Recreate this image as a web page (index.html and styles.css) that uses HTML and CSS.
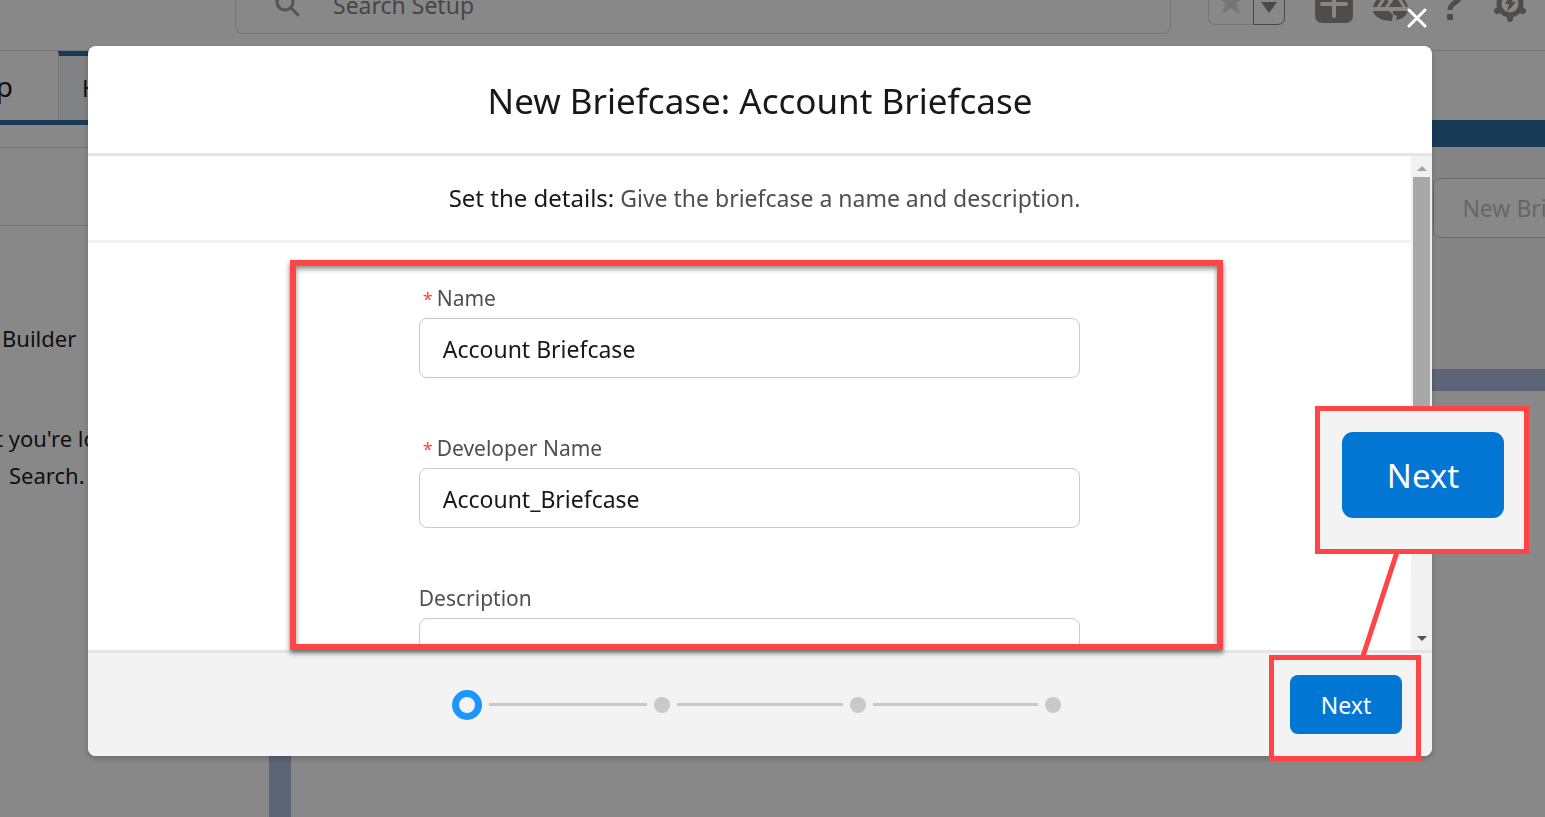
FILE: index.html
```
<!DOCTYPE html>
<html lang="en">
<head>
    <meta charset="UTF-8">
    <title>New Briefcase: Account Briefcase</title>
    <link rel="stylesheet" href="styles.css">
</head>
<body>

<div class="app">
    <header class="global-header">
        <div class="search">
            <svg class="search-icon" width="26" height="26" viewBox="0 0 26 26" fill="none" stroke="#a09c99" stroke-width="3" stroke-linecap="round">
                <circle cx="10" cy="10" r="8"/>
                <path d="M16 16l7 7"/>
            </svg>
            <input class="search-input" type="text" placeholder="Search Setup" aria-label="Search Setup">
        </div>
        <div class="global-actions">
            <div class="favorites">
                <button class="fav-star" aria-label="Favorites">
                    <svg width="28" height="28" viewBox="0 0 28 28"><path fill="#dddbda" d="M14 0l3.500 9.500H27l-7.500 6L23 26l-9-6-9 6 3.500-10.500L1 9.500h9.500z"/></svg>
                </button>
                <button class="fav-list" aria-label="Favorites list">
                    <svg width="16" height="12" viewBox="0 0 16 12"><path fill="#8a8886" d="M0 0h16L8 11z"/></svg>
                </button>
            </div>
            <button class="icon-btn" aria-label="Create">
                <svg width="38" height="38" viewBox="0 0 38 38"><rect y="-1" width="38" height="38" rx="7" fill="#918f8d"/><path d="M19 6v24M7 18h24" stroke="#fff" stroke-width="4" stroke-linecap="round"/></svg>
            </button>
            <button class="icon-btn" aria-label="Guidance">
                <svg width="38" height="38" viewBox="0 0 38 38">
                    <path fill="#918f8d" d="M-1 21a18 18 0 0 1 35 0z"/>
                    <path fill="#918f8d" d="M-1 25h16l4 4-1 6C8 35 0 31-1 25zM19 25h15c-2 5-6 8-12 9l1-4-4-2z"/>
                    <path d="M4 22l8-13 4 6M12 22l10-14 9 14" fill="none" stroke="#fff" stroke-width="3"/>
                </svg>
            </button>
            <button class="icon-btn" aria-label="Help">
                <svg width="38" height="38" viewBox="0 0 38 38"><path d="M10 11c0-12 17-11 17-1 0 7-10 6-10 14" fill="none" stroke="#918f8d" stroke-width="5"/><rect x="14" y="28" width="6" height="6" rx="1" fill="#918f8d"/></svg>
            </button>
            <button class="icon-btn" aria-label="Setup">
                <svg width="38" height="38" viewBox="0 0 38 38">
                    <circle cx="18" cy="18" r="11" fill="none" stroke="#918f8d" stroke-width="5"/>
                    <path d="M18 4v2M18 31v2M5 11l2 1M29 24l2 1M31 11l-2 1M7 24l-2 1" stroke="#918f8d" stroke-width="6" stroke-linecap="round"/>
                    <path fill="#918f8d" d="M17 11h5l-2 5h4l-9 10 2-8h-4z"/>
                </svg>
            </button>
        </div>
    </header>

    <nav class="context-bar">
        <div class="app-name"><span>Setup</span></div>
        <a class="tab" href="#">Home</a>
    </nav>

    <div class="workspace">
        <aside class="sidebar">
            <div class="sidebar-top"></div>
            <div class="sidebar-search"></div>
            <a class="tree-item" href="#">Builder</a>
            <p class="tree-hint hint-first">t you're looking for?</p>
            <p class="tree-hint hint-second">Search.</p>
        </aside>
        <main class="content">
            <section class="page-card">
                <button class="new-btn" disabled>New Briefcase</button>
            </section>
            <section class="list-card"></section>
        </main>
    </div>
</div>

<div class="backdrop">
    <div class="modal" role="dialog" aria-modal="true" aria-labelledby="modalTitle">
        <button class="close-btn" aria-label="Close">
            <svg width="20" height="20" viewBox="0 0 20 20" stroke="#fff" stroke-width="3" stroke-linecap="round"><path d="M2 2l16 16M18 2L2 18"/></svg>
        </button>

        <div class="modal-header">
            <h1 id="modalTitle">New Briefcase: Account Briefcase</h1>
        </div>

        <div class="modal-body">
            <div class="modal-content">
                <p class="step-title"><strong>Set the details:</strong> Give the briefcase a name and description.</p>
                <form class="details-form">
                    <div class="field">
                        <label class="required" for="name"><abbr>*</abbr>Name</label>
                        <input id="name" type="text" value="Account Briefcase">
                    </div>
                    <div class="field">
                        <label class="required" for="devName"><abbr>*</abbr>Developer Name</label>
                        <input id="devName" type="text" value="Account_Briefcase">
                    </div>
                    <div class="field">
                        <label for="description">Description</label>
                        <textarea id="description"></textarea>
                    </div>
                </form>
            </div>
            <div class="scrollbar">
                <span class="arrow arrow-up"></span>
                <span class="thumb"></span>
                <span class="arrow arrow-down"></span>
            </div>
        </div>

        <div class="modal-footer">
            <div class="progress">
                <span class="step step-active"></span>
                <span class="line"></span>
                <span class="step"></span>
                <span class="line"></span>
                <span class="step"></span>
                <span class="line"></span>
                <span class="step"></span>
            </div>
            <button class="next-btn">Next</button>
        </div>

        <!-- callouts -->
        <div class="mark mark-form"></div>
        <div class="mark mark-next"></div>
        <svg class="mark-line" width="44" height="104" viewBox="0 0 44 104"><path d="M39 0L5 104" stroke="#ff4545" stroke-width="5"/></svg>
        <div class="mark mark-zoom">
            <button class="next-btn next-btn-large">Next</button>
        </div>
    </div>
</div>

</body>
</html>
```

FILE: styles.css
```
* {
    box-sizing: border-box;
}

body {
    margin: 0;
    font-family: "Noto Sans", "Open Sans", sans-serif;
    font-size: 23px;
    color: #181818;
    background: #fff;
    overflow: hidden;
}

button, input, textarea {
    font: inherit;
}

button {
    padding: 0;
    border: 0;
    background: none;
    cursor: pointer;
}

a {
    color: inherit;
    text-decoration: none;
}

p, h1 {
    margin: 0;
}

.app {
    display: flex;
    flex-direction: column;
    height: 100vh;
    overflow: hidden;
}

/* header */
.global-header {
    display: flex;
    flex: none;
    align-items: center;
    gap: 37px;
    height: 91px;
    margin-top: -40px;
    padding: 0 15px 0 235px;
    border-bottom: 1px solid #dddbda;
}

.search {
    display: flex;
    flex: 1;
    align-items: center;
    height: 58px;
    padding-left: 39px;
    gap: 32px;
    border: 1px solid #dddbda;
    border-radius: 8px;
}

.search-input {
    flex: 1;
    padding: 0;
    border: 0;
    outline: 0;
    background: none;
}

.search-input::placeholder {
    color: #82807e;
    opacity: 1;
}

.global-actions {
    display: flex;
    align-items: center;
    gap: 21px;
}

.favorites {
    display: flex;
    height: 40px;
    margin-right: 9px;
}

.fav-star {
    width: 45px;
    border: 1px solid #dddbda;
    border-right: 0;
    border-radius: 7px 0 0 7px;
}

.fav-list {
    width: 32px;
    border: 1px solid #82807e;
    border-radius: 0 7px 7px 0;
}

.icon-btn {
    width: 38px;
    height: 38px;
}

.icon-btn svg {
    display: block;
    overflow: visible;
}

.context-bar {
    display: flex;
    flex: none;
    height: 74px;
    border-bottom: 5px solid #276aa2;
}

.app-name {
    display: flex;
    align-items: center;
    justify-content: flex-end;
    width: 58px;
    padding-right: 45px;
    overflow: hidden;
    font-size: 28px;
}

.tab {
    display: flex;
    align-items: center;
    width: 120px;
    padding-left: 23px;
    border-top: 5px solid #276aa2;
    border-left: 1px solid #dddbda;
    background: #eef1f6;
}

.workspace {
    display: flex;
    flex: 1;
    min-height: 0;
}

.sidebar {
    flex: none;
    width: 269px;
    font-size: 22px;
    white-space: nowrap;
    overflow: hidden;
}

.sidebar-top {
    height: 23px;
    border-bottom: 1px solid #dddbda;
}

.sidebar-search {
    height: 78px;
    border-bottom: 1px solid #dddbda;
}

.tree-item {
    display: block;
    margin-top: 94px;
    padding-left: 2px;
    line-height: 37px;
}

.tree-hint {
    line-height: 37px;
}

.hint-first {
    margin-top: 63px;
    text-indent: -5px;
}

.hint-second {
    padding-left: 9px;
}

.content {
    display: flex;
    flex: 1;
    flex-direction: column;
    gap: 22px;
    min-width: 0;
    padding-left: 22px;
    border-top: 22px solid #276aa2;
    background: #a8bddd;
    overflow: hidden;
}

.page-card {
    display: flex;
    justify-content: flex-end;
    align-items: flex-start;
    height: 222px;
    padding-top: 31px;
    background: #f7f7f7;
}

.new-btn {
    flex: none;
    width: 212px;
    height: 60px;
    margin-right: -100px;
    border: 1px solid #c9c7c5;
    border-radius: 8px;
    background: #fff;
    color: #c0bebc;
}

.list-card {
    flex: 1;
    background: #fff;
}

/* modal */
.backdrop {
    position: fixed;
    inset: 0;
    display: flex;
    padding: 46px 113px 61px 88px;
    background: rgba(8, 7, 7, 0.48);
}

.modal {
    position: relative;
    display: flex;
    flex: 1;
    flex-direction: column;
    min-width: 0;
    border-radius: 8px;
    background: #fff;
    box-shadow: 0 3px 5px rgba(0, 0, 0, 0.2);
}

.close-btn {
    position: absolute;
    top: -38px;
    right: 5px;
    width: 20px;
    height: 20px;
}

.close-btn svg {
    display: block;
}

.modal-header {
    padding: 29px 24px 26px;
    border-bottom: 3px solid #e5e5e5;
    text-align: center;
}

.modal-header h1 {
    font-size: 35px;
    font-weight: 400;
    line-height: 52px;
}

.modal-body {
    display: flex;
    flex: 1;
    min-height: 0;
}

.modal-content {
    flex: 1;
    overflow: hidden;
}

.step-title {
    padding: 24px 0 24px 30px;
    border-bottom: 3px solid #f3f3f3;
    line-height: 36px;
    text-align: center;
    color: #514f4d;
}

.step-title strong {
    font-size: 24px;
    font-weight: 400;
    color: #181818;
}

.details-form {
    display: flex;
    flex-direction: column;
    gap: 56px;
    width: 50%;
    margin: 0 auto;
    padding-top: 41px;
}

.field label {
    display: block;
    margin-bottom: 6px;
    font-size: 21px;
    line-height: 28px;
    color: #514f4d;
}

.required {
    padding-left: 4px;
}

.required abbr {
    margin-right: 4px;
    font-size: 18px;
    line-height: 1;
    color: #ff4545;
}

.field input,
.field textarea {
    display: block;
    width: 100%;
    height: 60px;
    padding: 2px 23px 0;
    border: 1px solid #c9c9c9;
    border-radius: 8px;
    outline: 0;
    background: #fff;
    color: #181818;
}

.field textarea {
    height: 120px;
    resize: none;
}

.scrollbar {
    display: flex;
    flex-direction: column;
    align-items: center;
    width: 21px;
    padding: 10px 0 9px;
    background: #f1f1f1;
}

.arrow {
    border: 5px solid transparent;
    border-top: 0;
    border-bottom-color: #a3a3a3;
}

.arrow-down {
    margin-top: auto;
    border-top: 5px solid #505050;
    border-bottom: 0;
}

.thumb {
    width: 17px;
    height: 60%;
    margin-top: 6px;
    background: #a8a8a8;
}

.modal-footer {
    display: grid;
    grid-template-columns: 1fr 609px 1fr;
    align-items: center;
    padding: 22px 30px 22px 23px;
    border-top: 3px solid #e5e5e5;
    border-radius: 0 0 8px 8px;
    background: #f3f3f3;
}

.progress {
    display: grid;
    grid-column: 2;
    grid-template-columns: 30px 158fr 16px 165fr 16px 165fr 16px;
    align-items: center;
    gap: 7px;
}

.step {
    height: 16px;
    border-radius: 50%;
    background: #c9c9c9;
}

.step-active {
    height: 30px;
    border: 7px solid #1b96ff;
    background: #f3f3f3;
}

.line {
    height: 3px;
    background: #c9c9c9;
}

.next-btn {
    justify-self: end;
    width: 112px;
    height: 59px;
    border-radius: 8px;
    background: #0176d3;
    color: #fff;
}

/* callouts */
.mark {
    position: absolute;
    border: 5px solid #ff4545;
}

.mark-form {
    top: 214px;
    right: 209px;
    bottom: 106px;
    left: 202px;
    border-width: 6px;
    box-shadow: 0 3px 5px rgba(0, 0, 0, 0.55), inset 0 3px 5px rgba(0, 0, 0, 0.45);
    pointer-events: none;
}

.mark-next {
    right: 11px;
    bottom: -5px;
    width: 152px;
    height: 106px;
    pointer-events: none;
}

.mark-line {
    position: absolute;
    right: 30px;
    bottom: 100px;
}

.mark-zoom {
    right: -97px;
    bottom: 202px;
    width: 214px;
    height: 148px;
    padding: 21px 20px 0 22px;
    background: #f3f3f3;
}

.next-btn-large {
    width: 162px;
    height: 86px;
    border-radius: 11px;
    font-size: 33px;
}
```
